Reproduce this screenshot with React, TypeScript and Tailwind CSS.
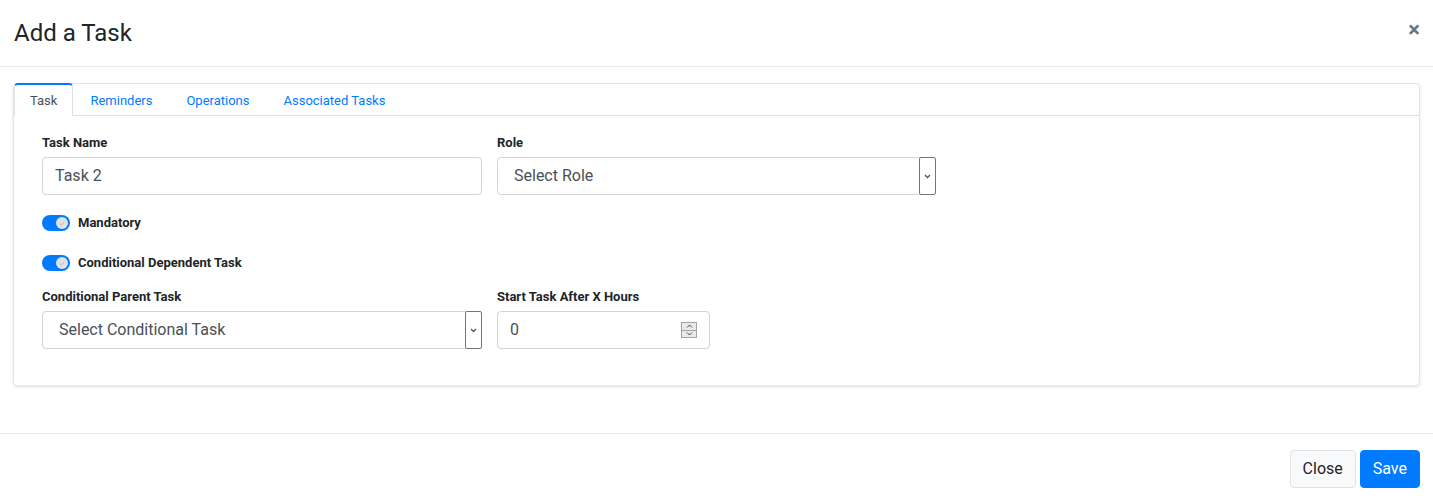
import { useState } from "react";

const tabs = ["Task", "Reminders", "Operations", "Associated Tasks"];

function Toggle({ label }: { label: string }) {
  return (
    <div className="flex h-[16px] items-center gap-[8px]">
      <div className="flex h-[16px] w-[28px] items-center justify-end rounded-full bg-[#007bff] pr-[2px]">
        <div className="flex h-[12px] w-[12px] items-center justify-center rounded-full bg-[#dfe3e8]">
          <svg width="6" height="5" viewBox="0 0 6 5">
            <path d="M0.8 2.6 L2.3 4 L5.2 1" fill="none" stroke="#b7bcc2" strokeWidth="1" />
          </svg>
        </div>
      </div>
      <span className="text-[13px] font-bold text-[#212529]">{label}</span>
    </div>
  );
}

function SelectBox({ placeholder, width }: { placeholder: string; width: string }) {
  return (
    <div className={`flex h-[38px] items-stretch rounded-[4px] border border-[#ced4da] bg-white ${width}`}>
      <div className="flex flex-1 items-center pl-[16px] text-[16px] text-[#495057]">{placeholder}</div>
      <div className="-my-px -mr-px flex w-[17px] items-center justify-center rounded-[2px] border border-[#767676] bg-white">
        <svg width="7" height="5" viewBox="0 0 7 5">
          <path d="M1 1 L3.5 3.5 L6 1" fill="none" stroke="#555" strokeWidth="1.3" />
        </svg>
      </div>
    </div>
  );
}

export default function App() {
  const [active, setActive] = useState(0);

  return (
    <div className="flex h-[500px] w-[1433px] flex-col bg-white font-[Roboto,sans-serif] text-[#212529]">
      {/* header */}
      <div className="flex h-[67px] items-center justify-between border-b border-[#e9ecef] pl-[14px] pr-[13px]">
        <h4 className="text-[24px] leading-none">Add a Task</h4>
        <span className="-mt-[6px] text-[22px] font-bold leading-none text-[#6c757d]">×</span>
      </div>

      {/* body */}
      <div className="flex-1 px-[13px] pt-[16px]">
        <div className="rounded-[4px] border border-[#e3e6ea] shadow-[0_1px_3px_rgba(0,0,0,0.12)]">
          <div className="flex h-[32px] border-b border-[#dee2e6]">
            {tabs.map((t, i) => (
              <button
                key={t}
                onClick={() => setActive(i)}
                className={
                  i === active
                    ? "-mb-px -mt-px flex items-center rounded-t-[4px] border-x border-t-2 border-x-[#dee2e6] border-t-[#007bff] bg-white px-[15px] pt-[1px] text-[13px] text-[#495057]"
                    : "flex items-center border border-transparent px-[16px] pt-[2px] text-[13px] text-[#007bff]"
                }
              >
                {t}
              </button>
            ))}
          </div>

          <div className="px-[28px] pb-[36px] pt-[17px]">
            <div className="flex gap-[15px]">
              <div className="w-[440px]">
                <div className="mb-[5px] text-[13px] font-bold leading-[19px]">Task Name</div>
                <div className="flex h-[38px] items-center rounded-[4px] border border-[#ced4da] px-[12px] text-[16px] text-[#495057]">
                  Task 2
                </div>
              </div>
              <div className="w-[439px]">
                <div className="mb-[5px] text-[13px] font-bold leading-[19px]">Role</div>
                <SelectBox placeholder="Select Role" width="w-[439px]" />
              </div>
            </div>

            <div className="mt-[20px] flex flex-col gap-[24px]">
              <Toggle label="Mandatory" />
              <Toggle label="Conditional Dependent Task" />
            </div>

            <div className="mt-[16px] flex gap-[15px]">
              <div className="w-[440px]">
                <div className="mb-[5px] text-[13px] font-bold leading-[19px]">Conditional Parent Task</div>
                <SelectBox placeholder="Select Conditional Task" width="w-[440px]" />
              </div>
              <div className="w-[213px]">
                <div className="mb-[5px] text-[13px] font-bold leading-[19px]">Start Task After X Hours</div>
                <div className="flex h-[38px] items-center justify-between rounded-[4px] border border-[#ced4da] pl-[12px] pr-[12px] text-[16px] text-[#495057]">
                  <span>0</span>
                  <div className="flex h-[16px] w-[16px] flex-col border border-[#a3a3a3] bg-[#e9e9e9]">
                    <div className="flex flex-1 items-center justify-center border-b border-[#a3a3a3]">
                      <svg width="7" height="4" viewBox="0 0 7 4">
                        <path d="M1 3.5 L3.5 1 L6 3.5" fill="none" stroke="#444" strokeWidth="1" />
                      </svg>
                    </div>
                    <div className="flex flex-1 items-center justify-center">
                      <svg width="7" height="4" viewBox="0 0 7 4">
                        <path d="M1 0.5 L3.5 3 L6 0.5" fill="none" stroke="#444" strokeWidth="1" />
                      </svg>
                    </div>
                  </div>
                </div>
              </div>
            </div>
          </div>
        </div>
      </div>

      {/* footer */}
      <div className="flex h-[67px] items-start justify-end gap-[4px] border-t border-[#e9ecef] pr-[13px] pt-[16px]">
        <button className="h-[38px] rounded-[4px] border border-[#dee2e6] bg-[#f8f9fa] px-[12px] text-[16px] text-[#212529]">
          Close
        </button>
        <button className="h-[38px] rounded-[4px] border border-[#007bff] bg-[#007bff] px-[12px] text-[16px] text-white">
          Save
        </button>
      </div>
    </div>
  );
}
